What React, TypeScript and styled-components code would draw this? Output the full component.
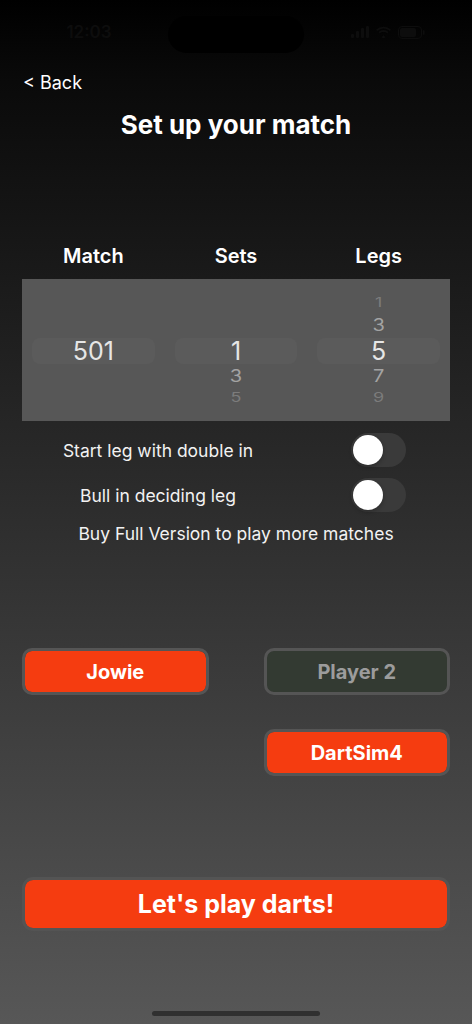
import styled, { createGlobalStyle } from 'styled-components'

const COLORS = {
  orange: '#f53c10',
  rim: '#555555',
  panel: '#575757',
  pill: '#5b5b5b',
  track: '#3a3a3a',
  status: '#0d0d0d',
}

const GlobalStyle = createGlobalStyle`
  html, body {
    margin: 0;
    padding: 0;
    background: #000;
  }
  body {
    font-family: Inter, "Noto Sans", "Liberation Sans", sans-serif;
    color: #fff;
    -webkit-font-smoothing: antialiased;
  }
`

const Screen = styled('div')`
  width: 472px;
  height: 1024px;
  display: flex;
  flex-direction: column;
  background: linear-gradient(180deg, #000 0%, #0a0a0a 8%, #575757 100%);
  overflow: hidden;
`

const StatusBar = styled('div')`
  height: 54px;
  display: grid;
  grid-template-columns: 1fr 136px 1fr;
  align-items: center;
  color: ${COLORS.status};
  font-size: 17px;
  font-weight: 600;
`

const Clock = styled('span')`
  text-align: center;
  padding-left: 10px;
  padding-top: 10px;
`

const Island = styled('div')`
  height: 37px;
  margin-top: 14px;
  border-radius: 19px;
  background: #000;
`

const StatusIcons = styled('div')`
  display: flex;
  justify-content: center;
  gap: 6px;
  padding-top: 10px;
`

const BackLink = styled('div')`
  margin: 18px 0 0 23px;
  font-size: 18px;
  line-height: 22px;
`

const Title = styled('h1')`
  margin: 16px 0 0;
  text-align: center;
  font-size: 26px;
  line-height: 30px;
  font-weight: 700;
`

const Headers = styled('div')`
  margin: 104px 22px 0;
  display: grid;
  grid-template-columns: repeat(3, 1fr);
  font-size: 20px;
  line-height: 24px;
  font-weight: 600;
  text-align: center;
`

const PickerPanel = styled('div')`
  margin: 11px 22px 0;
  height: 142px;
  background: ${COLORS.panel};
  display: grid;
  grid-template-columns: repeat(3, 1fr);
`

const Wheel = styled('div')`
  display: flex;
  flex-direction: column;
  padding: 13px 10px 0;
`

const SLOT_HEIGHTS = [20, 26, 26, 24, 18]
const SLOT_STYLE = [
  { size: 18, color: '#7c7c7c', squash: 0.7 },
  { size: 20, color: '#a3a3a3', squash: 0.85 },
  { size: 25, color: '#e6e6e6', squash: 1 },
  { size: 20, color: '#a3a3a3', squash: 0.85 },
  { size: 18, color: '#7c7c7c', squash: 0.7 },
]

const Slot = styled('div')<{ $index: number; $selected?: boolean }>`
  height: ${(p) => SLOT_HEIGHTS[p.$index]}px;
  display: flex;
  align-items: center;
  justify-content: center;
  border-radius: 8px;
  background: ${(p) => (p.$selected ? COLORS.pill : 'transparent')};
  color: ${(p) => SLOT_STYLE[p.$index].color};
  font-size: ${(p) => SLOT_STYLE[p.$index].size}px;

  span {
    display: inline-block;
    transform: scaleY(${(p) => SLOT_STYLE[p.$index].squash});
  }
`

const OptionRow = styled('div')<{ $top: number }>`
  margin: ${(p) => p.$top}px 22px 0;
  height: 34px;
  display: grid;
  grid-template-columns: 272px 1fr;
  gap: 12px;
  align-items: center;
  font-size: 17.5px;
`

const OptionLabel = styled('span')`
  text-align: center;
  color: #f2f2f2;
`

const Toggle = styled('div')`
  justify-self: center;
  width: 55px;
  height: 34px;
  border-radius: 17px;
  background: ${COLORS.track};
  padding: 2px;
  box-sizing: border-box;
`

const Knob = styled('div')`
  width: 30px;
  height: 30px;
  border-radius: 50%;
  background: #fff;
  box-shadow: 0 2px 4px rgba(0, 0, 0, 0.25);
`

const Upsell = styled('div')`
  margin-top: 11px;
  text-align: center;
  font-size: 17.5px;
  line-height: 22px;
  color: #f2f2f2;
`

const PlayerGrid = styled('div')`
  margin: 103px 22px 0;
  display: grid;
  grid-template-columns: 1fr 1fr;
  column-gap: 55px;
  row-gap: 34px;
`

const PlayerButton = styled('div')<{ $active?: boolean; $column?: number }>`
  grid-column: ${(p) => p.$column ?? 'auto'};
  height: 47px;
  box-sizing: border-box;
  border: 3px solid ${COLORS.rim};
  border-radius: 10px;
  background: ${(p) => (p.$active ? COLORS.orange : '#333a32')};
  background-clip: padding-box;
  display: flex;
  align-items: center;
  justify-content: center;
  font-size: 20px;
  font-weight: 700;
  color: ${(p) => (p.$active ? '#fff' : '#9c9c9c')};
`

const PlayButton = styled('div')`
  margin: 101px 22px 0;
  height: 54px;
  box-sizing: border-box;
  border: 3px solid #545454;
  border-radius: 11px;
  background: ${COLORS.orange};
  background-clip: padding-box;
  display: flex;
  align-items: center;
  justify-content: center;
  font-size: 25px;
  font-weight: 700;
`

const HomeIndicator = styled('div')`
  margin: 80px auto 0;
  width: 168px;
  height: 5px;
  border-radius: 3px;
  background: #303030;
`

type WheelData = {
  values: (string | null)[]
}

const wheels: WheelData[] = [
  { values: [null, null, '501', null, null] },
  { values: [null, null, '1', '3', '5'] },
  { values: ['1', '3', '5', '7', '9'] },
]

const options = [
  { label: 'Start leg with double in', top: 12 },
  { label: 'Bull in deciding leg', top: 11 },
]

const App = () => {
  return (
    <>
      <GlobalStyle />
      <Screen>
        <StatusBar>
          <Clock>12:03</Clock>
          <Island />
          <StatusIcons>
            <svg width="18" height="12" viewBox="0 0 18 12" fill={COLORS.status}>
              <rect x="0" y="8" width="3" height="4" rx="1" />
              <rect x="5" y="5" width="3" height="7" rx="1" />
              <rect x="10" y="2" width="3" height="10" rx="1" />
              <rect x="15" y="0" width="3" height="12" rx="1" />
            </svg>
            <svg width="17" height="12" viewBox="0 0 17 12" fill={COLORS.status}>
              <path d="M8.5 2.5c2.4 0 4.6.9 6.2 2.5l1.3-1.3A10.6 10.6 0 0 0 8.5.7 10.6 10.6 0 0 0 1 3.7L2.3 5a8.8 8.8 0 0 1 6.2-2.5zM8.5 6c1.4 0 2.7.5 3.7 1.4l1.3-1.3a7.2 7.2 0 0 0-10 0l1.3 1.3c1-.9 2.3-1.4 3.7-1.4zM8.5 9.3l1.9 1.9-1.9 1.8-1.9-1.8z" />
            </svg>
            <svg width="27" height="13" viewBox="0 0 27 13">
              <rect x="0.5" y="0.5" width="23" height="12" rx="3.5" fill="none" stroke={COLORS.status} />
              <rect x="2" y="2" width="16" height="9" rx="2" fill={COLORS.status} />
              <rect x="25" y="4" width="1.5" height="5" rx="0.7" fill={COLORS.status} />
            </svg>
          </StatusIcons>
        </StatusBar>

        <BackLink>&lt; Back</BackLink>
        <Title>Set up your match</Title>

        <Headers>
          <span>Match</span>
          <span>Sets</span>
          <span>Legs</span>
        </Headers>

        <PickerPanel>
          {wheels.map((wheel, w) => (
            <Wheel key={w}>
              {wheel.values.map((value, i) => (
                <Slot key={i} $index={i} $selected={i === 2}>
                  {value && <span>{value}</span>}
                </Slot>
              ))}
            </Wheel>
          ))}
        </PickerPanel>

        {options.map((option) => (
          <OptionRow key={option.label} $top={option.top}>
            <OptionLabel>{option.label}</OptionLabel>
            <Toggle>
              <Knob />
            </Toggle>
          </OptionRow>
        ))}

        <Upsell>Buy Full Version to play more matches</Upsell>

        <PlayerGrid>
          <PlayerButton $active>Jowie</PlayerButton>
          <PlayerButton>Player 2</PlayerButton>
          <PlayerButton $active $column={2}>
            DartSim4
          </PlayerButton>
        </PlayerGrid>

        <PlayButton>Let's play darts!</PlayButton>

        <HomeIndicator />
      </Screen>
    </>
  )
}

export default App
